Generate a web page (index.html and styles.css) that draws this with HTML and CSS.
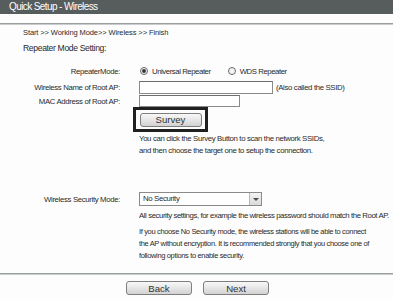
FILE: index.html
```html
<!DOCTYPE html>
<html>
<head>
<meta charset="utf-8">
<link rel="stylesheet" href="styles.css">
</head>
<body>
<div class="titlebar">Quick Setup - Wireless</div>
<div class="rule top-rule"></div>
<div class="intro">
  <div class="crumbs">Start &gt;&gt; Working Mode&gt;&gt; Wireless &gt;&gt; Finish</div>
  <div class="section">Repeater Mode Setting:</div>
</div>
<div class="form">
  <div class="label row1">RepeaterMode:</div>
  <div class="field row1">
    <span class="radio checked"></span><span class="opt">Universal Repeater</span>
    <span class="radio second"></span><span class="opt">WDS Repeater</span>
  </div>
  <div class="label row2">Wireless Name of Root AP:</div>
  <div class="field row2"><span class="input ssid"></span><span class="note">(Also called the SSID)</span></div>
  <div class="label row3">MAC Address of Root AP:</div>
  <div class="field row3"><span class="input mac"></span></div>
  <div class="field survey-cell"><div class="focus-box"><span class="btn survey">Survey</span></div></div>
  <div class="field help">You can click the Survey Button to scan the network SSIDs,<br>and then choose the target one to setup the connection.</div>
  <div class="label row-sec">Wireless Security Mode:</div>
  <div class="field row-sec"><span class="select"><span class="sel-text">No Security</span><span class="sel-arrow"><span class="tri"></span></span></span></div>
  <div class="field note1">All security settings, for example the wireless password should match the Root AP.</div>
  <div class="field note2">If you choose No Security mode, the wireless stations will be able to connect<br>the AP without encryption. It is recommended strongly that you choose one of<br>following options to enable security.</div>
</div>
<div class="rule bottom-rule"></div>
<div class="actions">
  <span class="btn nav">Back</span>
  <span class="btn nav">Next</span>
</div>
</body>
</html>
```
FILE: styles.css
```css
html, body {
  margin: 0;
  padding: 0;
  background: #fdfdfd;
}
body {
  font-family: "Liberation Sans", Arial, sans-serif;
  color: #2a2a2a;
  font-size: 8px;
  width: 393px;
  height: 299px;
  overflow: hidden;
}
.titlebar {
  height: 14px;
  line-height: 14px;
  background: #575c5c;
  color: #ffffff;
  font-size: 10px;
  letter-spacing: -0.6px;
  padding-left: 9px;
}
.rule {
  height: 0;
  border-top: 1px solid #9aa0a0;
  border-bottom: 1px solid #c9cdcd;
}
.top-rule {
  margin-top: 9px;
}
.intro {
  padding-left: 23px;
}
.crumbs {
  margin-top: 3px;
  line-height: 10px;
  font-size: 7.5px;
  letter-spacing: -0.1px;
}
.section {
  margin-top: 4px;
  line-height: 12px;
  font-size: 8.6px;
  letter-spacing: -0.35px;
}
.form {
  display: grid;
  grid-template-columns: 120px auto;
  column-gap: 19px;
  margin-top: 10px;
  letter-spacing: -0.35px;
}
.label {
  grid-column: 1;
  text-align: right;
  display: flex;
  align-items: center;
  justify-content: flex-end;
  font-size: 7.8px;
}
.field {
  grid-column: 2;
  display: flex;
  align-items: center;
}
.row1 { height: 14px; }
.row2 { height: 13px; margin-top: 3px; }
.row3 { height: 12px; margin-top: 1px; }
.radio {
  width: 6px;
  height: 6px;
  border: 1px solid #6a6a6a;
  border-radius: 50%;
  background: #f4f4f4;
  position: relative;
  margin-left: 1px;
  box-sizing: content-box;
}
.radio.checked::after {
  content: "";
  position: absolute;
  left: 1px;
  top: 1px;
  width: 4px;
  height: 4px;
  border-radius: 50%;
  background: #3a3a3a;
}
.radio.second {
  margin-left: 17px;
}
.opt {
  margin-left: 4px;
  font-size: 7.8px;
  letter-spacing: -0.45px;
}
.input {
  display: block;
  box-sizing: border-box;
  border: 1px solid #8a8a8a;
  border-top-color: #6e6e6e;
  background: #ffffff;
}
.ssid { width: 134px; height: 13px; }
.mac { width: 101px; height: 12px; }
.note {
  margin-left: 3px;
  font-size: 7.8px;
}
.survey-cell {
  margin-left: -6px;
}
.focus-box {
  width: 75px;
  height: 25px;
  box-sizing: border-box;
  border: 3px solid #202020;
  display: flex;
  align-items: center;
  justify-content: center;
}
.btn {
  display: inline-flex;
  align-items: center;
  justify-content: center;
  box-sizing: border-box;
  border: 1px solid #7e7e7e;
  border-radius: 3px;
  background: linear-gradient(#f8f8f8, #e2e2e2 60%, #d2d2d2);
  color: #333333;
  font-size: 9.6px;
  letter-spacing: 0;
}
.survey {
  width: 62px;
  height: 14px;
}
.help {
  line-height: 12px;
  font-size: 7.8px;
  margin-top: 1px;
  display: block;
}
.row-sec {
  height: 14px;
  margin-top: 35px;
}
.select {
  display: flex;
  width: 123px;
  height: 14px;
  box-sizing: border-box;
  border: 1px solid #8a8a8a;
  background: #ffffff;
}
.sel-text {
  flex: 1;
  padding-left: 3px;
  line-height: 12px;
  font-size: 7.8px;
}
.sel-arrow {
  width: 11px;
  border-left: 1px solid #b8b8b8;
  background: linear-gradient(#f4f4f4, #dadada);
  display: flex;
  align-items: center;
  justify-content: center;
}
.tri {
  width: 0;
  height: 0;
  border-left: 3px solid transparent;
  border-right: 3px solid transparent;
  border-top: 3px solid #4a4a4a;
}
.note1 {
  display: block;
  margin-top: 4px;
  line-height: 12px;
  font-size: 7.8px;
  letter-spacing: -0.42px;
  white-space: nowrap;
}
.note2 {
  display: block;
  margin-top: 4px;
  line-height: 12px;
  font-size: 7.5px;
  letter-spacing: -0.35px;
  white-space: nowrap;
}
.bottom-rule {
  margin-top: 11px;
}
.actions {
  display: flex;
  gap: 11px;
  padding-left: 126px;
  margin-top: 6px;
}
.nav {
  width: 66px;
  height: 14px;
  font-size: 9.6px;
}
```
